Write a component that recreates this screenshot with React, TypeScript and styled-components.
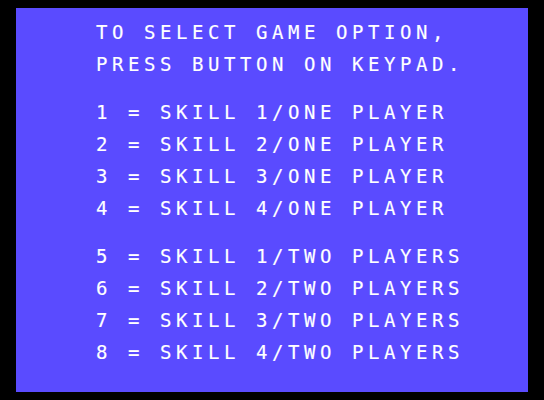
import React from "react";
import styled, { createGlobalStyle } from "styled-components";

const GlobalStyle = createGlobalStyle`
  html, body {
    margin: 0;
    padding: 0;
    background: #000;
  }
`;

// TMS9918 style screen: 256x192 pixels shown at 2x
const Frame = styled.div`
  width: 544px;
  height: 400px;
  box-sizing: border-box;
  padding: 8px 16px;
  background: #000;
`;

const Screen = styled.div`
  width: 512px;
  height: 384px;
  box-sizing: border-box;
  padding: 16px 0 0 80px;
  background: #5a4bff;
  display: flex;
  flex-direction: column;
  gap: 32px;
`;

const Group = styled.div`
  display: flex;
  flex-direction: column;
  gap: 16px;
`;

const Line = styled.div`
  height: 16px;
  line-height: 16px;
  font-family: "DejaVu Sans Mono", "Liberation Mono", monospace;
  font-size: 19px;
  letter-spacing: 4.56px;
  color: #fff;
  -webkit-text-stroke: 0.15px #fff;
  white-space: pre;
`;

const groups: string[][] = [
  ["TO SELECT GAME OPTION,", "PRESS BUTTON ON KEYPAD."],
  [
    "1 = SKILL 1/ONE PLAYER",
    "2 = SKILL 2/ONE PLAYER",
    "3 = SKILL 3/ONE PLAYER",
    "4 = SKILL 4/ONE PLAYER",
  ],
  [
    "5 = SKILL 1/TWO PLAYERS",
    "6 = SKILL 2/TWO PLAYERS",
    "7 = SKILL 3/TWO PLAYERS",
    "8 = SKILL 4/TWO PLAYERS",
  ],
];

const App: React.FC = () => {
  return (
    <>
      <GlobalStyle />
      <Frame>
        <Screen>
          {groups.map((lines, i) => (
            <Group key={i}>
              {lines.map((text) => (
                <Line key={text}>{text}</Line>
              ))}
            </Group>
          ))}
        </Screen>
      </Frame>
    </>
  );
};

export default App;
